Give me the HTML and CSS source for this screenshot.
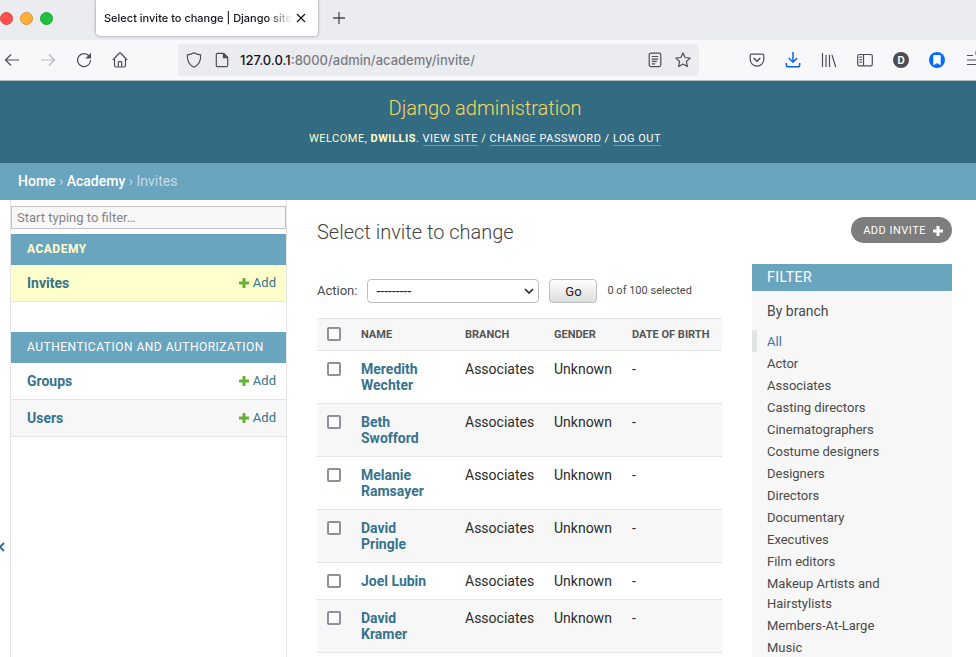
FILE: index.html
```html
<!DOCTYPE html>
<html lang="en">
<head>
<meta charset="utf-8">
<title>Select invite to change | Django site admin</title>
<link rel="stylesheet" href="styles.css">
</head>
<body>
<svg class="defs" aria-hidden="true">
  <symbol id="plus" viewBox="0 0 12 12"><path d="M4.5 1h3v3.5H11v3H7.5V11h-3V7.500H1v-3h3.500z" fill="currentColor"/></symbol>
</svg>

<div class="tabstrip">
  <div class="lights"><span class="light red"></span><span class="light amber"></span><span class="light green"></span></div>
  <div class="tab">
    <span class="tab-title">Select invite to change | Django site</span>
    <button class="tab-close" aria-label="Close tab"><svg width="10" height="10" viewBox="0 0 10 10"><path d="M1 1l8 8M9 1l-8 8" stroke="#15141a" stroke-width="1.200"/></svg></button>
  </div>
  <button class="tab-new" aria-label="New tab"><svg width="14" height="14" viewBox="0 0 14 14"><path d="M7 1v12M1 7h12" stroke="#4a4953" stroke-width="1.300"/></svg></button>
</div>

<div class="toolbar">
  <div class="tools">
    <button class="tool" aria-label="Back"><svg viewBox="0 0 16 16"><path d="M15 8H1.500M7 2.500L1.500 8 7 13.500"/></svg></button>
    <button class="tool dim" aria-label="Forward"><svg viewBox="0 0 16 16"><path d="M1 8h13.500M9 2.500L14.500 8 9 13.500"/></svg></button>
    <button class="tool" aria-label="Reload"><svg viewBox="0 0 16 16"><path d="M13.200 4.200A6.500 6.500 0 1 0 14.500 8"/><path class="solid" d="M15 .8v5.700H9.300z"/></svg></button>
    <button class="tool" aria-label="Home"><svg viewBox="0 0 16 16"><path d="M.9 8L7 1.500q1-1 2 0L15.100 8M2.500 7v6.500q0 1.500 1.500 1.500h8q1.500 0 1.500-1.500V7M6.300 15V10.500q0-.8.8-.8h1.800q.8 0 .8.800V15"/></svg></button>
  </div>
  <div class="urlbar">
    <svg class="glyph" viewBox="0 0 16 16"><path d="M8 .8c2 1.200 4 1.800 6.600 2.100.4 5.500-1.600 10-6.600 12.300C3 12.900 1 8.400 1.400 2.900 4 2.600 6 2 8 .8z"/></svg>
    <svg class="glyph" viewBox="0 0 16 16"><path d="M3.500 1.300h6L13.700 5.500v8q0 1.200-1.200 1.200h-9q-1.200 0-1.200-1.200v-11q0-1.200 1.200-1.200z"/><path class="solid" d="M8.800 1.300h1.500l3.500 3.500v1.500h-5z"/></svg>
    <div class="url"><span class="host">127.0.0.1</span>:8000/admin/academy/invite/</div>
    <svg class="glyph" viewBox="0 0 16 16"><rect x="2.200" y="1.200" width="11.600" height="13.400" rx="1.800"/><path d="M4.800 4.500h6.400M4.800 7.200h6.400M4.800 9.400h5M4.800 11.800h3.500"/></svg>
    <svg class="glyph" viewBox="0 0 16 16"><path d="M8 .9l2.100 4.600 5 .6-3.700 3.400 1 5L8 12l-4.400 2.500 1-5L.9 6.100l5-.6z" stroke-linejoin="round"/></svg>
  </div>
  <div class="tools">
    <button class="tool" aria-label="Save to Pocket"><svg viewBox="0 0 16 16"><path d="M2.500 2.200h11q1.300 0 1.300 1.300v3.800a6.800 6.800 0 0 1-13.600 0V3.500q0-1.300 1.300-1.300z"/><path d="M4.700 6L8 9.200 11.300 6" stroke-width="1.600"/></svg></button>
    <button class="tool blue" aria-label="Downloads"><svg viewBox="0 0 16 16"><path d="M8 0v10M3.800 6L8 10.200 12.200 6M1.300 11v2q0 1.800 1.800 1.800h9.800q1.800 0 1.800-1.800v-2"/></svg></button>
    <button class="tool" aria-label="Library"><svg viewBox="0 0 16 16"><path d="M1.500 1v14M5 3v12M8.500 3v12M11 3l3.700 12"/></svg></button>
    <button class="tool" aria-label="Sidebars"><svg viewBox="0 0 16 16"><rect x=".7" y="2.500" width="14.600" height="11.300" rx="1.600"/><path d="M6.500 2.500v11.300M2.500 5.200h2.300M2.500 7.700h2.300M2.500 10.200h2.300"/></svg></button>
    <button class="tool" aria-label="Account"><span class="avatar">D</span></button>
    <button class="tool" aria-label="Bookmarking"><svg viewBox="0 0 16 16"><circle cx="8" cy="8" r="8" fill="#0a6cff" stroke="none"/><path d="M5.500 3h5q1.200 0 1.200 1.200v8.600H10.500Q9.600 11.200 8 11.200T5.500 12.800H4.300V4.200Q4.300 3 5.500 3z" fill="#fff" stroke="none"/></svg></button>
    <button class="tool" aria-label="Menu"><svg viewBox="0 0 16 16"><path d="M2 3.500h6M2 8h12M2 12.500h12"/><circle cx="13" cy="1" r="3" fill="#2ac3a2" stroke="none"/></svg></button>
  </div>
</div>

<header class="header">
  <h1>Django administration</h1>
  <div class="user-tools">Welcome, <strong>dwillis</strong>. <a href="#">View site</a> / <a href="#">Change password</a> / <a href="#">Log out</a></div>
</header>
<nav class="breadcrumbs" aria-label="Breadcrumbs"><a href="#">Home</a> › <a href="#">Academy</a> › Invites</nav>

<div class="main">
  <button class="toggle" aria-label="Toggle navigation"><svg width="14" height="10" viewBox="0 0 14 10"><path d="M6 1L2 5l4 4M12 1L8 5l4 4" fill="none" stroke="currentColor" stroke-width="2"/></svg></button>
  <nav class="sidebar" aria-label="Sidebar">
    <input class="nav-filter" type="search" placeholder="Start typing to filter…" aria-label="Filter navigation items">
    <table class="module">
      <caption class="current-app"><a href="#">Academy</a></caption>
      <tr class="current"><th scope="row"><a href="#">Invites</a></th><td><a class="add" href="#"><svg><use href="#plus"/></svg>Add</a></td></tr>
    </table>
    <table class="module">
      <caption><a href="#">Authentication and Authorization</a></caption>
      <tr><th scope="row"><a href="#">Groups</a></th><td><a class="add" href="#"><svg><use href="#plus"/></svg>Add</a></td></tr>
      <tr class="alt"><th scope="row"><a href="#">Users</a></th><td><a class="add" href="#"><svg><use href="#plus"/></svg>Add</a></td></tr>
    </table>
  </nav>

  <main class="content">
    <div class="title-row">
      <h2>Select invite to change</h2>
      <a class="add-button" href="#">Add invite<svg><use href="#plus"/></svg></a>
    </div>
    <div class="changelist">
      <form class="results-form">
        <div class="actions">
          <label for="action">Action:</label>
          <span class="select-wrap"><select id="action"><option>---------</option></select><svg width="10" height="6" viewBox="0 0 10 6"><path d="M1 1l4 4 4-4" fill="none" stroke="#222" stroke-width="1.600"/></svg></span>
          <button class="go" type="button">Go</button>
          <span class="counter">0 of 100 selected</span>
        </div>
        <table class="results">
          <colgroup><col class="c-check"><col class="c-name"><col class="c-branch"><col class="c-gender"><col></colgroup>
          <thead><tr><th><input type="checkbox" aria-label="Select all"></th><th>Name</th><th>Branch</th><th>Gender</th><th>Date of birth</th></tr></thead>
          <tbody>
            <tr><td><input type="checkbox" aria-label="Select Meredith Wechter"></td><th scope="row"><a href="#">Meredith Wechter</a></th><td>Associates</td><td>Unknown</td><td>-</td></tr>
            <tr><td><input type="checkbox" aria-label="Select Beth Swofford"></td><th scope="row"><a href="#">Beth Swofford</a></th><td>Associates</td><td>Unknown</td><td>-</td></tr>
            <tr><td><input type="checkbox" aria-label="Select Melanie Ramsayer"></td><th scope="row"><a href="#">Melanie Ramsayer</a></th><td>Associates</td><td>Unknown</td><td>-</td></tr>
            <tr><td><input type="checkbox" aria-label="Select David Pringle"></td><th scope="row"><a href="#">David<br>Pringle</a></th><td>Associates</td><td>Unknown</td><td>-</td></tr>
            <tr><td><input type="checkbox" aria-label="Select Joel Lubin"></td><th scope="row"><a href="#">Joel Lubin</a></th><td>Associates</td><td>Unknown</td><td>-</td></tr>
            <tr><td><input type="checkbox" aria-label="Select David Kramer"></td><th scope="row"><a href="#">David<br>Kramer</a></th><td>Associates</td><td>Unknown</td><td>-</td></tr>
          </tbody>
        </table>
      </form>
      <aside class="filter">
        <h2>Filter</h2>
        <h3>By branch</h3>
        <ul>
          <li class="selected"><a href="#">All</a></li>
          <li><a href="#">Actor</a></li>
          <li><a href="#">Associates</a></li>
          <li><a href="#">Casting directors</a></li>
          <li><a href="#">Cinematographers</a></li>
          <li><a href="#">Costume designers</a></li>
          <li><a href="#">Designers</a></li>
          <li><a href="#">Directors</a></li>
          <li><a href="#">Documentary</a></li>
          <li><a href="#">Executives</a></li>
          <li><a href="#">Film editors</a></li>
          <li><a href="#">Makeup Artists and Hairstylists</a></li>
          <li><a href="#">Members-At-Large</a></li>
          <li><a href="#">Music</a></li>
        </ul>
      </aside>
    </div>
  </main>
</div>
</body>
</html>
```
FILE: styles.css
```css
* { box-sizing: border-box; }

body {
  margin: 0;
  height: 100vh;
  overflow: hidden;
  display: flex;
  flex-direction: column;
  font: 14px/20px Roboto, "Liberation Sans", sans-serif;
  color: #2b2b2b;
  background: #fff;
}

a { color: #36738f; text-decoration: none; }
button { font-family: inherit; padding: 0; border: 0; background: none; }
.defs { position: absolute; width: 0; height: 0; }

/* Browser window */
.tabstrip {
  display: flex;
  flex: none;
  height: 40px;
  background: #ebecf0;
  font-family: Inter, sans-serif;
}
.lights { display: flex; gap: 7px; width: 95px; padding: 12px 0 0; }
.light { width: 13px; height: 13px; border-radius: 50%; border: 1px solid; }
.red { background: #ff5050; border-color: #e0443e; }
.amber { background: #ffb03b; border-color: #dc9530; }
.green { background: #1fc145; border-color: #1aab29; }
.tab {
  display: flex;
  align-items: center;
  width: 222px;
  height: 36px;
  margin-left: 1px;
  padding: 0 8px;
  background: #fff;
  border-radius: 0 0 4px 4px;
  box-shadow: 0 0 3px #80808e;
}
.tab-title {
  flex: 1;
  white-space: nowrap;
  font-size: 11px;
  font-weight: 500;
  color: #15141a;
  -webkit-mask-image: linear-gradient(to left, transparent, #000 24px);
  mask-image: linear-gradient(to left, transparent, #000 24px);
}
.tab-close { display: flex; justify-content: center; width: 18px; }
.tab-new { display: flex; align-items: center; justify-content: center; width: 42px; height: 36px; }

.toolbar {
  display: flex;
  flex: none;
  align-items: center;
  height: 41px;
  margin-right: -15px;
  background: #f8f8fa;
  border-bottom: 1px solid #b8bcc4;
  font-family: Inter, sans-serif;
}
.tools { display: flex; }
.tools:first-child { margin-left: -6px; }
.tool { display: flex; align-items: center; justify-content: center; width: 36px; height: 32px; }
.tool svg, .glyph { width: 16px; height: 16px; fill: none; stroke: #4f4e59; stroke-width: 1.2; overflow: visible; }
.tool .solid, .glyph .solid { fill: #4f4e59; stroke: none; }
.dim svg { stroke: #b6b6bd; }
.blue svg { stroke: #0a64e6; stroke-width: 1.5; }
.avatar {
  width: 16px;
  height: 16px;
  border-radius: 50%;
  background: #4d4c57;
  color: #fff;
  font: 700 10px/16px Inter, sans-serif;
}
.urlbar {
  display: flex;
  flex: 1;
  align-items: center;
  gap: 12px;
  height: 32px;
  margin: 0 40px;
  padding: 0 8px;
  border-radius: 4px;
  background: #ebecf0;
}
.url { flex: 1; margin-left: -2px; font-size: 13px; font-weight: 500; color: #7c7c83; }
.host { color: #15141a; }

/* Site header */
.header {
  flex: none;
  padding: 14px 6px 14px 0;
  background: #336b82;
  color: #ffc;
  text-align: center;
}
.header h1 { margin: 0 0 8px; font-size: 20px; line-height: 26px; font-weight: 300; color: #f8d85c; }
.user-tools { font-size: 11px; line-height: 20px; letter-spacing: 0.5px; text-transform: uppercase; }
.user-tools a { color: #fff; border-bottom: 1px solid #7098a8; }
.breadcrumbs {
  flex: none;
  padding: 8px 18px 9px;
  background: #69a5bf;
  color: #c4dce8;
}
.breadcrumbs a { color: #fff; font-weight: 500; }

/* Page body */
.main { display: flex; flex: 1; min-height: 0; overflow: hidden; }
.toggle {
  flex: none;
  display: flex;
  justify-content: center;
  width: 23px;
  margin-left: -13px;
  padding-top: 342px;
  color: #36738f;
}
.sidebar {
  flex: none;
  width: 277px;
  padding-top: 6px;
  border: solid #e3e5e5;
  border-width: 0 1px;
}
.nav-filter {
  display: block;
  width: 100%;
  height: 23px;
  margin: 0 0 5px;
  padding: 0 5px;
  border: 1px solid #c2c2c2;
  border-radius: 0;
  background: #f7f7f7;
  font: 13px Roboto, sans-serif;
  -webkit-appearance: none;
  appearance: none;
}
.nav-filter::placeholder { color: #858585; }
.module { width: 100%; margin-bottom: 30px; border-collapse: separate; border-spacing: 0; }
.module caption {
  padding: 5px 16px 6px;
  background: #69a5bf;
  text-align: left;
  text-transform: uppercase;
  font-size: 12px;
  letter-spacing: 0.5px;
}
.module caption a { color: #fff; }
.module .current-app a { color: #ffc; font-weight: 700; }
.module th, .module td { padding: 8px 10px 8px 16px; border-bottom: 1px solid #e3e5e5; text-align: left; }
.module th a { font-weight: 700; }
.current { background: #ffc; }
.alt { background: #f7f7f7; }
.add { display: flex; align-items: center; justify-content: flex-end; gap: 3px; font-size: 13px; }
.add svg { width: 12px; height: 12px; color: #67b13a; }

.content { flex: 1; min-width: 0; padding: 17px 24px 0 30px; }
.title-row { display: flex; justify-content: space-between; height: 47px; }
.title-row h2 { margin: 0; font-size: 20px; line-height: 30px; font-weight: 300; color: #444; }
.add-button {
  display: flex;
  align-items: center;
  gap: 6px;
  height: 26px;
  padding: 1px 8px 0 12px;
  border-radius: 13px;
  background: #7d7d7d;
  color: #fff;
  font-size: 11px;
  letter-spacing: 0.5px;
  text-transform: uppercase;
}
.add-button svg { width: 12px; height: 12px; }

.changelist { display: flex; gap: 30px; align-items: flex-start; }
.results-form { flex: 1; min-width: 0; }
.actions { display: flex; align-items: center; gap: 10px; height: 54px; color: #4a4a4a; font-size: 13px; }
.select-wrap { position: relative; display: flex; width: 172px; }
.select-wrap svg { position: absolute; right: 5px; top: 9px; pointer-events: none; }
.select-wrap select {
  width: 100%;
  height: 24px;
  padding: 0 8px;
  border: 1px solid #bfbfbf;
  border-radius: 4px;
  background: #fff;
  color: #222;
  font: 14px Roboto, sans-serif;
  -webkit-appearance: none;
  appearance: none;
}
.go {
  width: 48px;
  height: 24px;
  border: 1px solid #bfbfbf;
  border-radius: 4px;
  background: linear-gradient(#fff, #ddd);
  color: #222;
  font-size: 13px;
}
.counter { font-size: 11px; }

.results { width: 100%; table-layout: fixed; border-collapse: separate; border-spacing: 0; line-height: 16px; }
.c-check { width: 34px; }
.c-name { width: 104px; }
.c-branch { width: 89px; }
.c-gender { width: 78px; }
.results th, .results td { padding: 10px; border-bottom: 1px solid #e3e5e5; text-align: left; vertical-align: top; }
.results thead th {
  padding: 8px 0 7px 10px;
  border-top: 1px solid #e3e5e5;
  background: #f7f7f7;
  color: #555;
  font-size: 11px;
  font-weight: 700;
  text-transform: uppercase;
  white-space: nowrap;
}
.results tbody tr:nth-child(even) { background: #f7f7f7; }
.results tbody th { font-weight: 700; }
.results input {
  display: block;
  width: 14px;
  height: 14px;
  margin: 1px 0;
  border: 2px solid #8f8f9d;
  border-radius: 2px;
  background: #fff;
  -webkit-appearance: none;
  appearance: none;
}
.results thead input { margin: 0; }

.filter { flex: none; width: 200px; min-height: 100vh; background: #f7f7f7; }
.filter h2 {
  margin: 0 0 10px;
  padding: 3px 15px 4px;
  background: #69a5bf;
  color: #fff;
  font-size: 14px;
  font-weight: 400;
  letter-spacing: 0.5px;
  text-transform: uppercase;
}
.filter h3 { margin: 0 0 9px; padding: 0 15px; font-size: 14px; font-weight: 400; color: #4a4a4a; }
.filter ul { margin: 0; padding: 0; list-style: none; font-size: 13px; }
.filter li { padding: 2px 15px 0 10px; border-left: 5px solid transparent; }
.filter li a { color: #4a4a4a; }
.filter .selected { border-color: #e3e5e5; }
.filter .selected a { color: #3d73ad; }
```
